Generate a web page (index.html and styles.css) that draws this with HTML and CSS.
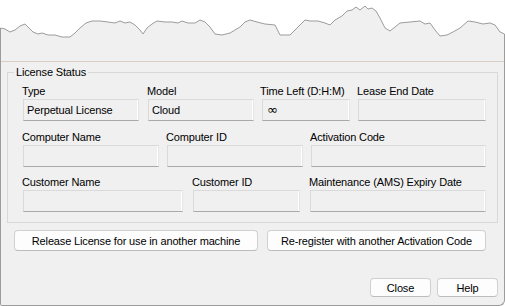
FILE: index.html
```html
<!DOCTYPE html>
<html lang="en">
<head>
    <meta charset="UTF-8">
    <title>License Status</title>
    <link rel="stylesheet" href="styles.css">
</head>
<body>

<svg class="torn" width="505" height="40" viewBox="0 0 505 40">
    <polygon fill="#f0f0f0" points="0.5,28 5,29 10,32 15,30 20,26 25,24 28,27 33,32 38,34 42,33 48,35 55,35 62,37 70,37 75,33 80,28 86,23 92,21 100,21 108,22 115,23 120,21 125,23 130,22 135,25 140,30 143,34 147,28 152,24 157,21 165,22 172,22 178,23 182,21 188,23 195,23 200,20 205,22 210,27 215,34 222,35 230,33 235,30 240,27 245,22 250,20 257,22 265,24 275,25 280,35 290,35 295,30 300,25 305,20 310,21 318,21 325,23 330,25 335,20 342,16 347,11 352,10 356,7 360,10 365,6 368,9 372,8 376,11 380,18 385,28 390,31 395,27 400,23 410,22 420,21 425,24 430,23 435,30 440,36 447,35 453,32 460,28 468,21 475,22 483,24 490,23 495,25 500,32 504.5,34 504.5,40 0.5,40"/>
    <polyline fill="none" stroke="#9c9c9c" stroke-width="1" points="0.5,40 0.5,28 5,29 10,32 15,30 20,26 25,24 28,27 33,32 38,34 42,33 48,35 55,35 62,37 70,37 75,33 80,28 86,23 92,21 100,21 108,22 115,23 120,21 125,23 130,22 135,25 140,30 143,34 147,28 152,24 157,21 165,22 172,22 178,23 182,21 188,23 195,23 200,20 205,22 210,27 215,34 222,35 230,33 235,30 240,27 245,22 250,20 257,22 265,24 275,25 280,35 290,35 295,30 300,25 305,20 310,21 318,21 325,23 330,25 335,20 342,16 347,11 352,10 356,7 360,10 365,6 368,9 372,8 376,11 380,18 385,28 390,31 395,27 400,23 410,22 420,21 425,24 430,23 435,30 440,36 447,35 453,32 460,28 468,21 475,22 483,24 490,23 495,25 500,32 504.5,34 504.5,40"/>
</svg>

<div class="dialog">
    <div class="separator"></div>

    <fieldset class="group">
        <legend>License Status</legend>

        <div class="row row-1">
            <div class="cell w-type">
                <div class="label">Type</div>
                <div class="field">Perpetual License</div>
            </div>
            <div class="cell w-model">
                <div class="label">Model</div>
                <div class="field">Cloud</div>
            </div>
            <div class="cell w-time">
                <div class="label shift">Time Left (D:H:M)</div>
                <div class="field"><span class="infinity">&infin;</span></div>
            </div>
            <div class="cell w-lease">
                <div class="label">Lease End Date</div>
                <div class="field"></div>
            </div>
        </div>

        <div class="row row-2">
            <div class="cell w-comp">
                <div class="label">Computer Name</div>
                <div class="field"></div>
            </div>
            <div class="cell w-comp">
                <div class="label">Computer ID</div>
                <div class="field"></div>
            </div>
            <div class="cell w-code">
                <div class="label">Activation Code</div>
                <div class="field"></div>
            </div>
        </div>

        <div class="row row-3">
            <div class="cell w-custname">
                <div class="label">Customer Name</div>
                <div class="field"></div>
            </div>
            <div class="cell w-custid">
                <div class="label">Customer ID</div>
                <div class="field"></div>
            </div>
            <div class="cell w-ams">
                <div class="label">Maintenance (AMS) Expiry Date</div>
                <div class="field"></div>
            </div>
        </div>
    </fieldset>

    <div class="actions">
        <button class="btn btn-release">Release License for use in another machine</button>
        <button class="btn btn-register">Re-register with another Activation Code</button>
    </div>

    <div class="footer">
        <button class="btn btn-small">Close</button>
        <button class="btn btn-small">Help</button>
    </div>
</div>

</body>
</html>
```

FILE: styles.css
```css
body {
    margin: 0;
    width: 505px;
    height: 306px;
    background: #ffffff;
    font-family: "Liberation Sans", Arial, sans-serif;
    font-size: 11px;
    letter-spacing: -0.15px;
    color: #000;
    overflow: hidden;
}

.torn {
    display: block;
}

.dialog {
    box-sizing: border-box;
    width: 505px;
    height: 266px;
    background: #f0f0f0;
    border: 1px solid #9c9c9c;
    border-top: none;
    border-bottom-right-radius: 6px;
    border-bottom-left-radius: 2px;
    display: flex;
    flex-direction: column;
}

.separator {
    height: 1px;
    margin-top: 21px;
    background: #d8cec6;
}

.group {
    box-sizing: border-box;
    width: 491px;
    margin: 4px 0 0 6px;
    padding: 5px 0 10px 15px;
    border: 1px solid #d8d8d8;
    min-width: 0;
}

.group legend {
    padding: 0 2px;
    margin-left: -9px;
    line-height: 13px;
}

.row {
    display: flex;
    gap: 8px;
}

.row-2 {
    margin-top: 9px;
}

.row-3 {
    margin-top: 8px;
    gap: 10px;
}

.cell {
    display: flex;
    flex-direction: column;
}

.label {
    height: 14px;
    line-height: 14px;
    margin: 0 0 1px -1px;
    white-space: nowrap;
}

.label.shift {
    margin-left: -2px;
}

.field {
    box-sizing: border-box;
    height: 22px;
    line-height: 20px;
    padding-left: 3px;
    border: 1px solid #dadada;
    border-bottom-color: #a9a9a9;
    border-right-color: #e6e6e6;
    box-shadow: inset -1px 0 0 #ffffff;
    white-space: nowrap;
}

.infinity {
    font-family: "DejaVu Sans", sans-serif;
    font-size: 13px;
    padding-left: 1px;
}

.w-type { width: 116px; }
.w-model { width: 106px; margin-left: 1px; }
.w-time { width: 88px; }
.w-lease { width: 128px; }
.w-comp { width: 136px; }
.w-code { width: 175px; }
.w-custname { width: 160px; }
.w-custid { width: 107px; }
.w-ams { width: 176px; }

.actions {
    display: flex;
    gap: 9px;
    margin: 7px 0 0 13px;
}

.btn {
    box-sizing: border-box;
    height: 21px;
    padding: 0;
    font-family: "Liberation Sans", Arial, sans-serif;
    font-size: 11px;
    letter-spacing: -0.15px;
    color: #000;
    background: #fdfdfd;
    border: 1px solid #d0d0d0;
    border-bottom-color: #bcbcbc;
    border-radius: 4px;
}

.btn-release { width: 244px; }
.btn-register { width: 219px; }

.footer {
    display: flex;
    justify-content: flex-end;
    gap: 6px;
    margin: 27px 6px 0 0;
}

.btn-small {
    width: 61px;
    height: 19px;
}
```
